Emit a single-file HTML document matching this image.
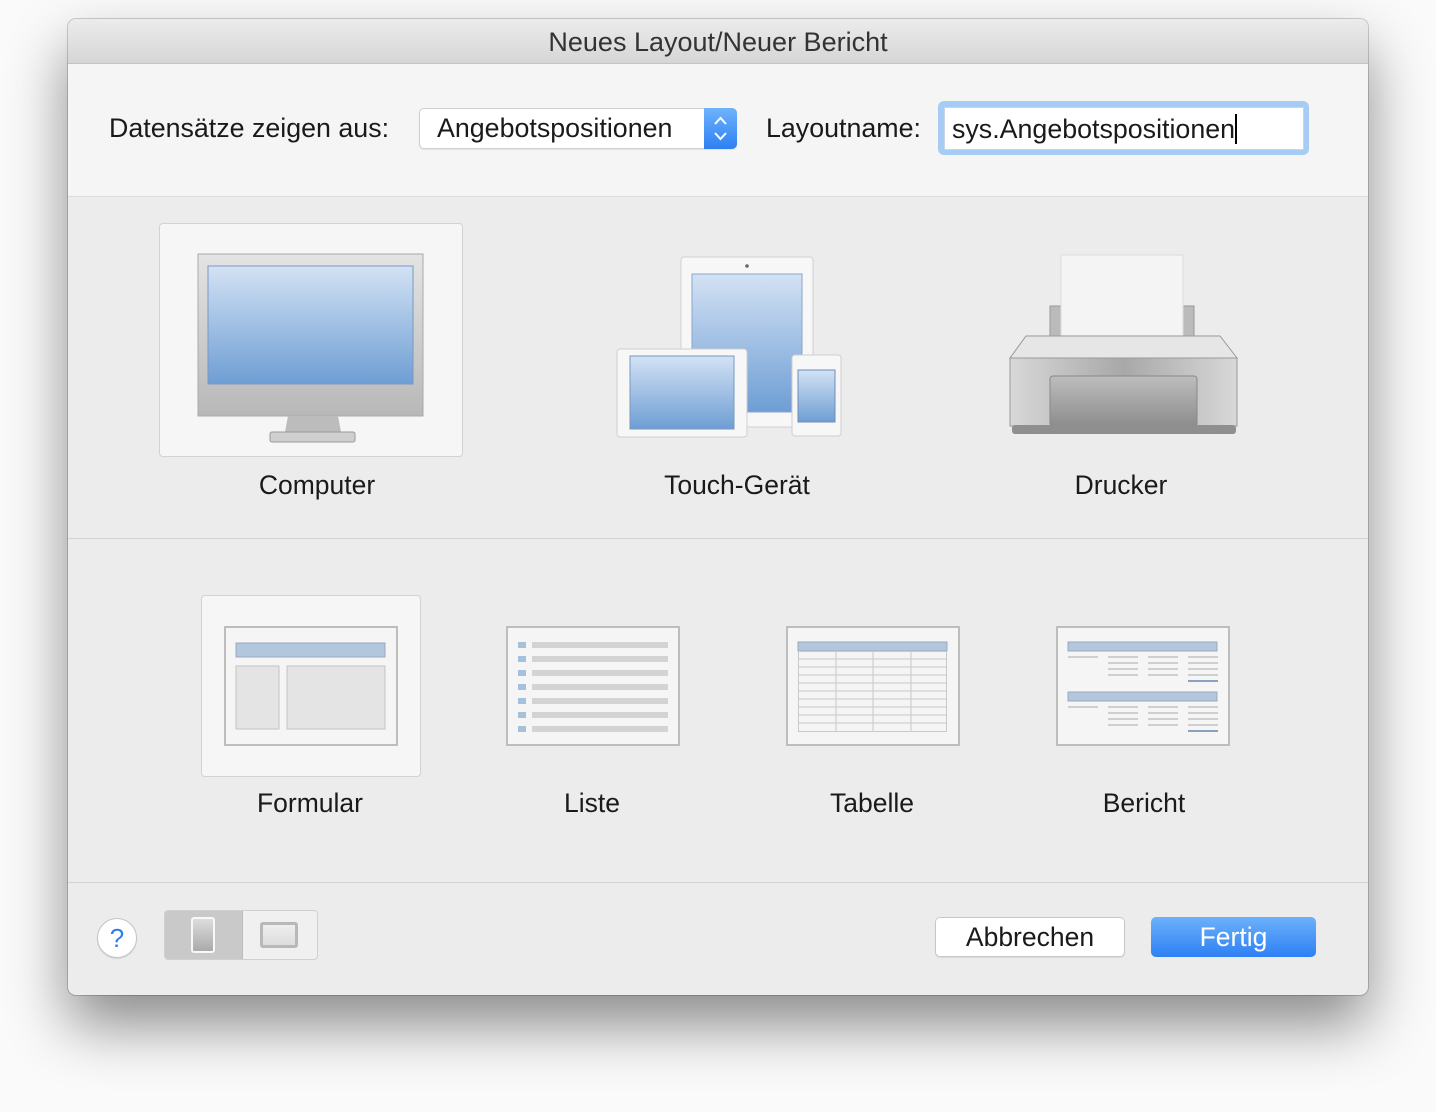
<!DOCTYPE html>
<html><head><meta charset="utf-8"><style>
body{margin:0;width:1436px;height:1112px;background:#fafafa;position:relative;overflow:hidden;font-family:"Liberation Sans",sans-serif;color:#1a1a1a}
.a{position:absolute}
.win{left:68px;top:19px;width:1300px;height:976px;border-radius:8px;background:#ececec;box-shadow:0 30px 60px rgba(0,0,0,.45),0 0 0 1px rgba(0,0,0,.18);overflow:hidden}
.lbl{font-size:26.5px;text-align:center;width:300px}
</style></head><body>
<div class="a win">
 <div class="a" style="left:0;top:0;width:1300px;height:44px;background:linear-gradient(#ececec,#d6d6d6);border-bottom:1px solid #c4c4c4"></div>
 <div class="a" style="left:0;top:8px;width:1300px;text-align:center;font-size:27px;color:#333">Neues Layout/Neuer Bericht</div>
 <div class="a" style="left:0;top:45px;width:1300px;height:132px;background:#f5f5f5;border-bottom:1px solid #dcdcdc"></div>
 <div class="a" style="left:0;top:519px;width:1300px;height:1px;background:#d2d2d2"></div>
 <div class="a" style="left:0;top:863px;width:1300px;height:1px;background:#d2d2d2"></div>
</div>
<div class="a" style="left:109px;top:113px;font-size:26.8px">Datensätze zeigen aus:</div>
<div class="a" style="left:419px;top:108px;width:316px;height:39px;background:#fff;border:1px solid #cfcfcf;border-radius:5px;box-shadow:0 1px 1px rgba(0,0,0,.08)"></div>
<div class="a" style="left:704px;top:108px;width:33px;height:41px;background:linear-gradient(#6fb3fb,#2f7ff3);border-radius:0 5px 5px 0"></div>
<svg class="a" style="left:704px;top:108px" width="33" height="41"><path d="M11 16l5.5-6 5.5 6M11 25l5.5 6 5.5-6" fill="none" stroke="#fff" stroke-width="2"/></svg>
<div class="a" style="left:437px;top:113px;font-size:26.8px">Angebotspositionen</div>
<div class="a" style="left:766px;top:113px;font-size:26.8px">Layoutname:</div>
<div class="a" style="left:938px;top:101px;width:371px;height:54px;background:#a7ccf3;border-radius:6px"></div>
<div class="a" style="left:944px;top:107px;width:358px;height:41px;background:#fff;border:1px solid #c6d6e8"></div>
<div class="a" style="left:952px;top:114px;font-size:26.8px">sys.Angebotspositionen<span style="display:inline-block;width:2px;height:30px;background:#000;vertical-align:-6px"></span></div>

<div class="a" style="left:159px;top:223px;width:302px;height:232px;background:#f6f6f6;border:1px solid #d2d2d2;border-radius:4px"></div>
<div class="a" style="left:201px;top:595px;width:218px;height:180px;background:#f6f6f6;border:1px solid #d2d2d2;border-radius:4px"></div>

<svg class="a" style="left:0;top:0" width="1436" height="1112">
<defs>
<linearGradient id="sc" x1="0" y1="0" x2="0" y2="1"><stop offset="0" stop-color="#d3e2f4"/><stop offset="1" stop-color="#6e9ed4"/></linearGradient>
<linearGradient id="mt" x1="0" y1="0" x2="0" y2="1"><stop offset="0" stop-color="#e4e4e4"/><stop offset="1" stop-color="#b8b8b8"/></linearGradient>
<linearGradient id="pb" x1="0" y1="0" x2="1" y2="0"><stop offset="0" stop-color="#d8d8d8"/><stop offset=".5" stop-color="#a8a8a8"/><stop offset="1" stop-color="#d8d8d8"/></linearGradient>
<linearGradient id="ps" x1="0" y1="0" x2="0" y2="1"><stop offset="0" stop-color="#bdbdbd"/><stop offset="1" stop-color="#8d8d8d"/></linearGradient>
</defs>
<rect x="198" y="254" width="225" height="162" fill="url(#mt)" stroke="#a9a9a9"/>
<rect x="208" y="266" width="205" height="118" fill="url(#sc)" stroke="#7a98bf"/>
<path d="M288 416h50l3 16h-56z" fill="#bcbcbc"/>
<rect x="270" y="432" width="85" height="10" rx="2" fill="#cfcfcf" stroke="#999"/>
<rect x="681" y="257" width="132" height="170" rx="3" fill="#f7f7f7" stroke="#d0d0d0"/>
<rect x="692" y="274" width="110" height="138" fill="url(#sc)" stroke="#8aa6c8"/>
<circle cx="747" cy="266" r="1.8" fill="#666"/>
<rect x="617" y="349" width="130" height="88" rx="3" fill="#f7f7f7" stroke="#cfcfcf"/>
<rect x="630" y="356" width="104" height="73" fill="url(#sc)" stroke="#7a98bf"/>
<rect x="792" y="355" width="49" height="81" rx="3" fill="#f7f7f7" stroke="#cfcfcf"/>
<rect x="798" y="370" width="37" height="52" fill="url(#sc)" stroke="#6d8db8"/>
<rect x="1050" y="306" width="144" height="32" fill="#bbb" stroke="#999"/>
<rect x="1061" y="255" width="122" height="82" fill="#f4f4f4" stroke="#ddd"/>
<path d="M1026 336h194l17 22h-227z" fill="#e6e6e6" stroke="#999"/>
<rect x="1010" y="358" width="227" height="68" fill="url(#pb)" stroke="#999"/>
<rect x="1050" y="376" width="147" height="50" rx="3" fill="url(#ps)" stroke="#888"/>
<rect x="1012" y="425" width="224" height="9" rx="3" fill="#8f8f8f"/>
<rect x="225" y="627" width="172" height="118" fill="#f5f5f5" stroke="#bdbdbd" stroke-width="2"/>
<rect x="236" y="643" width="149" height="14" fill="#b2c6de" stroke="#9aabbf"/>
<rect x="236" y="666" width="43" height="63" fill="#e4e4e4" stroke="#c4c4c4"/>
<rect x="287" y="666" width="98" height="63" fill="#e4e4e4" stroke="#c4c4c4"/>
<rect x="507" y="627" width="172" height="118" fill="#f5f5f5" stroke="#bdbdbd" stroke-width="2"/>
<g fill="#a9c0dc"><rect x="518" y="642" width="8" height="6"/><rect x="518" y="656" width="8" height="6"/><rect x="518" y="670" width="8" height="6"/><rect x="518" y="684" width="8" height="6"/><rect x="518" y="698" width="8" height="6"/><rect x="518" y="712" width="8" height="6"/><rect x="518" y="726" width="8" height="6"/></g>
<g fill="#d3d3d3"><rect x="532" y="642" width="136" height="6"/><rect x="532" y="656" width="136" height="6"/><rect x="532" y="670" width="136" height="6"/><rect x="532" y="684" width="136" height="6"/><rect x="532" y="698" width="136" height="6"/><rect x="532" y="712" width="136" height="6"/><rect x="532" y="726" width="136" height="6"/></g>
<rect x="787" y="627" width="172" height="118" fill="#f5f5f5" stroke="#bdbdbd" stroke-width="2"/>
<rect x="798" y="642" width="149" height="9" fill="#b2c6de" stroke="#9aabbf"/>
<g stroke="#c8c8c8" fill="none"><rect x="798.5" y="651.5" width="148" height="80"/>
<path d="M798 659h149M798 667h149M798 675h149M798 683h149M798 691h149M798 699h149M798 707h149M798 715h149M798 723h149M836 651v81M873 651v81M911 651v81"/></g>
<rect x="1057" y="627" width="172" height="118" fill="#f5f5f5" stroke="#bdbdbd" stroke-width="2"/>
<rect x="1068" y="642" width="149" height="9" fill="#b2c6de" stroke="#9aabbf"/>
<rect x="1068" y="692" width="149" height="9" fill="#b2c6de" stroke="#9aabbf"/>
<g stroke="#cfcfcf" stroke-width="2"><path d="M1068 657h30M1108 657h30M1148 657h30M1188 657h30M1108 663h30M1148 663h30M1188 663h30M1108 669h30M1148 669h30M1188 669h30M1108 675h30M1148 675h30M1188 675h30"/>
<path d="M1068 707h30M1108 707h30M1148 707h30M1188 707h30M1108 713h30M1148 713h30M1188 713h30M1108 719h30M1148 719h30M1188 719h30M1108 725h30M1148 725h30M1188 725h30"/></g>
<path d="M1188 681h30M1188 731h30" stroke="#8aa2c0" stroke-width="2"/>
</svg>

<div class="a lbl" style="left:167px;top:470px">Computer</div>
<div class="a lbl" style="left:587px;top:470px">Touch-Gerät</div>
<div class="a lbl" style="left:971px;top:470px">Drucker</div>
<div class="a lbl" style="left:160px;top:788px">Formular</div>
<div class="a lbl" style="left:442px;top:788px">Liste</div>
<div class="a lbl" style="left:722px;top:788px">Tabelle</div>
<div class="a lbl" style="left:994px;top:788px">Bericht</div>

<div class="a" style="left:97px;top:918px;width:38px;height:38px;border-radius:50%;background:#fff;border:1px solid #c4c4c4;box-shadow:0 1px 1px rgba(0,0,0,.1);text-align:center;font-size:26px;line-height:38px;color:#2f7fe6">?</div>
<div class="a" style="left:164px;top:910px;width:152px;height:48px;border:1px solid #d0d0d0;border-radius:4px;background:#f0f0f0;overflow:hidden">
 <div class="a" style="left:0;top:0;width:77px;height:48px;background:#c9c9c9;border-right:1px solid #bbb"></div>
 <div class="a" style="left:26px;top:6px;width:24px;height:36px;border-radius:3px;background:linear-gradient(#ddd,#aaa);border:2px solid #f8f8f8;box-sizing:border-box"></div>
 <div class="a" style="left:95px;top:11px;width:38px;height:26px;border-radius:3px;background:linear-gradient(#eee,#ddd);border:3px solid #b8b8b8;box-sizing:border-box"></div>
</div>
<div class="a" style="left:935px;top:917px;width:188px;height:38px;background:#fff;border:1px solid #c8c8c8;border-radius:5px;text-align:center;font-size:26.5px;line-height:38px;box-shadow:0 1px 1px rgba(0,0,0,.08)">Abbrechen</div>
<div class="a" style="left:1151px;top:917px;width:165px;height:40px;background:linear-gradient(#6cb1fb,#2e80f4);border-radius:5px;text-align:center;font-size:26.5px;line-height:40px;color:#fff">Fertig</div>
</body></html>
